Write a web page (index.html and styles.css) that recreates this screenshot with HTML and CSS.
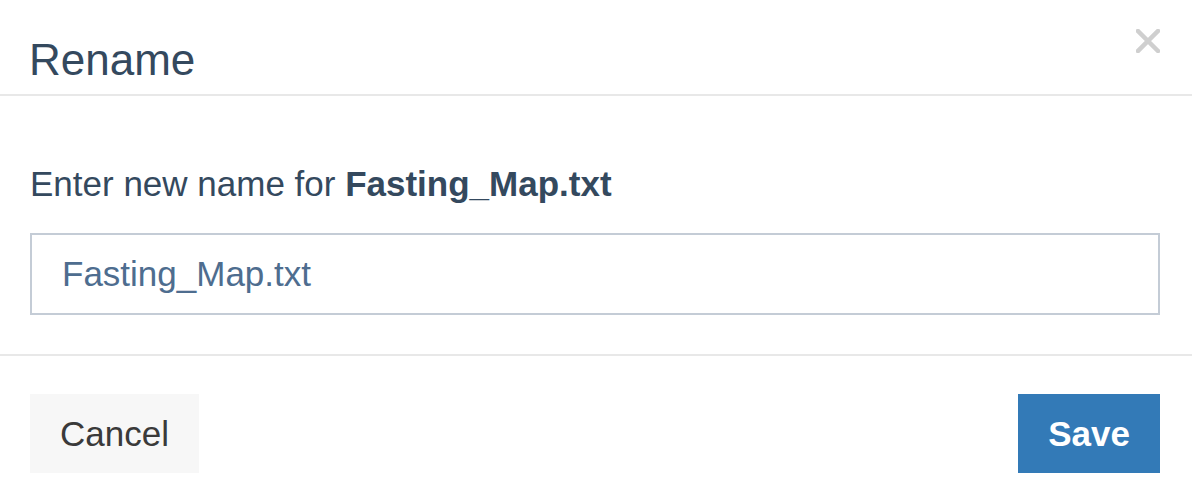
FILE: index.html
```html
<!DOCTYPE html>
<html lang="en">
<head>
<meta charset="utf-8">
<title>Rename</title>
<link rel="stylesheet" href="styles.css">
</head>
<body>
<div class="modal">
  <div class="modal-header">
    <h2 class="modal-title">Rename</h2>
    <button class="close" type="button" aria-label="Close">
      <svg width="24" height="24" viewBox="0 0 24 24"><path d="M2 2 L22 22 M22 2 L2 22" stroke="#cfcfcf" stroke-width="4.5" stroke-linecap="square" fill="none"/></svg>
    </button>
  </div>
  <div class="modal-body">
    <p class="prompt">Enter new name for <strong>Fasting_Map.txt</strong></p>
    <input class="name-input" type="text" value="Fasting_Map.txt">
  </div>
  <div class="modal-footer">
    <button class="btn btn-default" type="button">Cancel</button>
    <button class="btn btn-primary" type="button">Save</button>
  </div>
</div>
</body>
</html>
```

FILE: styles.css
```css
html, body {
  margin: 0;
  padding: 0;
  background: #ffffff;
}
body {
  font-family: "Liberation Sans", Arial, sans-serif;
  color: #34495e;
}
.modal {
  width: 1192px;
}
.modal-header {
  display: flex;
  justify-content: space-between;
  align-items: flex-start;
  padding: 29px 32px 9px 29px;
  border-bottom: 2px solid #e8e8e8;
}
.modal-title {
  margin: 6px 0 0;
  font-size: 44px;
  line-height: 50px;
  font-weight: normal;
  color: #34495e;
}
.close {
  margin: 0;
  padding: 0;
  border: 0;
  background: none;
  width: 24px;
  height: 24px;
  display: block;
}
.close svg {
  display: block;
}
.modal-body {
  padding: 70px 32px 39px 30px;
}
.prompt {
  margin: 0 0 31px;
  font-size: 35px;
  line-height: 36px;
  color: #34495e;
}
.prompt strong {
  font-weight: bold;
  color: #34495e;
}
.name-input {
  display: block;
  box-sizing: border-box;
  width: 100%;
  height: 82px;
  margin: 0;
  padding: 0 30px;
  border: 2px solid #c4ccd6;
  border-radius: 0;
  font-family: "Liberation Sans", Arial, sans-serif;
  font-size: 35px;
  color: #4e6d8f;
  background: #ffffff;
  outline: none;
}
.modal-footer {
  display: flex;
  justify-content: space-between;
  align-items: center;
  padding: 38px 32px 25px 30px;
  border-top: 2px solid #e8e8e8;
}
.btn {
  box-sizing: border-box;
  height: 79px;
  margin: 0;
  padding: 0 30px;
  border: 0;
  border-radius: 0;
  font-family: "Liberation Sans", Arial, sans-serif;
  font-size: 35px;
}
.btn-default {
  background: #f7f7f7;
  color: #3a3a3a;
}
.btn-primary {
  background: #337ab7;
  color: #ffffff;
  font-weight: bold;
}
```
